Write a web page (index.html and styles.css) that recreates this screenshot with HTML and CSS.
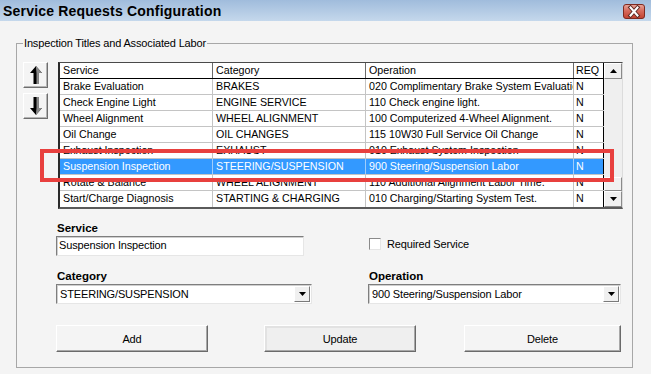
FILE: index.html
```html
<!DOCTYPE html>
<html>
<head>
<meta charset="utf-8">
<title>Service Requests Configuration</title>
<link rel="stylesheet" href="styles.css">
</head>
<body>
<div class="titlebar">
  <span class="title">Service Requests Configuration</span>
  <span class="close">
    <svg width="22" height="15" viewBox="0 0 22 15">
      <defs>
        <linearGradient id="cg" x1="0" y1="0" x2="0" y2="1">
          <stop offset="0" stop-color="#e9a79c"/>
          <stop offset="0.45" stop-color="#d66a5c"/>
          <stop offset="1" stop-color="#c2412f"/>
        </linearGradient>
      </defs>
      <rect x="0.5" y="0.5" width="21" height="14" rx="2.5" fill="url(#cg)" stroke="#7e2a20"/>
      <path d="M7.5 3.5 L14.5 11.5 M14.5 3.5 L7.5 11.5" stroke="#5d2a24" stroke-width="4" stroke-linecap="square"/>
      <path d="M7.5 3.5 L14.5 11.5 M14.5 3.5 L7.5 11.5" stroke="#ffffff" stroke-width="2" stroke-linecap="square"/>
    </svg>
  </span>
</div>

<fieldset class="group">
  <legend>Inspection Titles and Associated Labor</legend>

  <div class="top">
    <div class="movers">
      <button class="mover" type="button">
        <svg width="14" height="20" viewBox="0 0 14 20">
          <polygon points="7,1 13,8 9.5,8 9.5,19 4.5,19 4.5,8 1,8" fill="#000"/>
          <polygon points="7,1 13,8 9.5,8 9.5,19 7.5,19 7.5,8 7,3" fill="#8a8a8a"/>
        </svg>
      </button>
      <button class="mover" type="button">
        <svg width="14" height="20" viewBox="0 0 14 20">
          <polygon points="7,19 13,12 9.5,12 9.5,1 4.5,1 4.5,12 1,12" fill="#000"/>
          <polygon points="7,19 13,12 9.5,12 9.5,1 7.5,1 7.5,12 7,17" fill="#8a8a8a"/>
        </svg>
      </button>
    </div>

    <div class="grid">
      <div class="table">
        <div class="row head">
          <div class="c c1">Service</div><div class="c c2">Category</div><div class="c c3">Operation</div><div class="c c4">REQ</div>
        </div>
        <div class="row">
          <div class="c c1">Brake Evaluation</div><div class="c c2">BRAKES</div><div class="c c3">020 Complimentary Brake System Evaluation</div><div class="c c4">N</div>
        </div>
        <div class="row">
          <div class="c c1">Check Engine Light</div><div class="c c2">ENGINE SERVICE</div><div class="c c3">110 Check engine light.</div><div class="c c4">N</div>
        </div>
        <div class="row">
          <div class="c c1">Wheel Alignment</div><div class="c c2">WHEEL ALIGNMENT</div><div class="c c3">100 Computerized 4-Wheel Alignment.</div><div class="c c4">N</div>
        </div>
        <div class="row">
          <div class="c c1">Oil Change</div><div class="c c2">OIL CHANGES</div><div class="c c3">115 10W30 Full Service Oil Change</div><div class="c c4">N</div>
        </div>
        <div class="row">
          <div class="c c1">Exhaust Inspection</div><div class="c c2">EXHAUST</div><div class="c c3">010 Exhaust System Inspection</div><div class="c c4">N</div>
        </div>
        <div class="row selected">
          <div class="c c1">Suspension Inspection</div><div class="c c2">STEERING/SUSPENSION</div><div class="c c3">900 Steering/Suspension Labor</div><div class="c c4">N</div>
        </div>
        <div class="row">
          <div class="c c1">Rotate &amp; Balance</div><div class="c c2">WHEEL ALIGNMENT</div><div class="c c3">110 Additional Alignment Labor Time.</div><div class="c c4">N</div>
        </div>
        <div class="row">
          <div class="c c1">Start/Charge Diagnosis</div><div class="c c2">STARTING &amp; CHARGING</div><div class="c c3">010 Charging/Starting System Test.</div><div class="c c4">N</div>
        </div>
      </div>
      <div class="vscroll">
        <div class="sbtn">
          <svg width="7" height="4" viewBox="0 0 7 4"><polygon points="3.5,0 7,4 0,4" fill="#000"/></svg>
        </div>
        <div class="track"><div class="thumb"></div></div>
        <div class="sbtn">
          <svg width="7" height="4" viewBox="0 0 7 4"><polygon points="0,0 7,0 3.5,4" fill="#000"/></svg>
        </div>
      </div>
    </div>
  </div>

  <div class="form">
    <label class="lbl">Service</label>
    <div></div>
    <div class="textbox">Suspension Inspection</div>
    <div class="check">
      <span class="box"></span>
      <span class="checktext">Required Service</span>
    </div>
    <label class="lbl lbl2">Category</label>
    <label class="lbl lbl2">Operation</label>
    <div class="combo combo-left">
      <span class="combotext">STEERING/SUSPENSION</span>
      <span class="dd"><svg width="7" height="4" viewBox="0 0 7 4"><polygon points="0,0 7,0 3.5,4" fill="#000"/></svg></span>
    </div>
    <div class="combo combo-right">
      <span class="combotext">900 Steering/Suspension Labor</span>
      <span class="dd"><svg width="7" height="4" viewBox="0 0 7 4"><polygon points="0,0 7,0 3.5,4" fill="#000"/></svg></span>
    </div>
  </div>

  <div class="actions">
    <button class="btn btn-add" type="button">Add</button>
    <button class="btn btn-update" type="button">Update</button>
    <button class="btn btn-delete" type="button">Delete</button>
  </div>
</fieldset>

<div class="highlight"></div>
</body>
</html>
```

FILE: styles.css
```css
* {
  box-sizing: border-box;
}

html, body {
  margin: 0;
  padding: 0;
}

body {
  width: 651px;
  height: 374px;
  overflow: hidden;
  position: relative;
  background: #f4f4f4;
  font-family: "Liberation Sans", Arial, sans-serif;
  color: #000;
}

/* Title bar */
.titlebar {
  height: 21px;
  display: flex;
  align-items: center;
  justify-content: space-between;
  padding: 0 6px 0 3px;
  background: linear-gradient(#a0bcdc, #c5d8ec);
}

.title {
  font-weight: bold;
  font-size: 14px;
  letter-spacing: 0.2px;
  line-height: 16px;
}

.close {
  display: flex;
  width: 22px;
  height: 15px;
  margin-top: 1px;
}

/* Group box */
.group {
  width: 617px;
  margin: 15px 0 0 16px;
  padding: 12px 9px 15px 6px;
  border: 1px solid #a7a7a7;
  min-width: 0;
}

.group legend {
  padding: 0 1px;
  font-size: 11px;
  letter-spacing: -0.15px;
  line-height: 14px;
}

.top {
  display: flex;
  gap: 10px;
  height: 147px;
}

.movers {
  display: flex;
  flex-direction: column;
  gap: 5px;
  width: 25px;
}

.mover {
  width: 25px;
  height: 26px;
  padding: 0;
  display: flex;
  align-items: center;
  justify-content: center;
  background: #f4f4f4;
  border: 1px solid;
  border-color: #ffffff #6e6e6e #6e6e6e #ffffff;
  box-shadow: inset -1px -1px 0 #b4b4b4;
}

/* Data grid */
.grid {
  width: 565px;
  height: 147px;
  display: flex;
  border-top: 1px solid #4a4a4a;
  border-left: 2px solid #2a2a2a;
  border-bottom: 2px solid #5a5a5a;
  border-right: 1px solid #dcdcdc;
  background: #fff;
}

.table {
  width: 544px;
  display: flex;
  flex-direction: column;
}

.row {
  display: flex;
  height: 16px;
  border-bottom: 1px solid #c4c4c4;
  font-size: 10.7px;
  line-height: 15px;
}

.row:last-child {
  border-bottom: none;
}

.row.head {
  border-bottom: 1px solid #000;
}

.c {
  padding-left: 3px;
  white-space: nowrap;
  overflow: hidden;
  border-right: 1px solid #c4c4c4;
}

.head .c {
  border-right-color: #6a6a6a;
}

.c1 { width: 153px; }
.c2 { width: 153px; }
.c3 { width: 208px; }
.c4 {
  width: 30px;
  padding-left: 2px;
  border-right-color: #000 !important;
}

.row.selected {
  background: #3399ff;
  color: #fff;
}

.row.selected .c {
  border-right-color: #9fcdfb;
}

/* Scrollbar */
.vscroll {
  width: 18px;
  display: flex;
  flex-direction: column;
  background: #efefef;
}

.sbtn {
  height: 16px;
  display: flex;
  align-items: center;
  justify-content: center;
  background: #f0f0f0;
  border: 1px solid;
  border-color: #ffffff #8a8a8a #8a8a8a #ffffff;
}

.track {
  flex: 1;
  display: flex;
  flex-direction: column;
  justify-content: flex-end;
}

.thumb {
  height: 14px;
  background: #f0f0f0;
  border: 1px solid;
  border-color: #ffffff #8a8a8a #8a8a8a #ffffff;
}

/* Form */
.form {
  display: grid;
  grid-template-columns: 256px 253px;
  column-gap: 56px;
  margin: 12px 0 0 33px;
}

.lbl {
  font-weight: bold;
  font-size: 11.5px;
  line-height: 14px;
  padding-left: 1px;
  margin-bottom: 1px;
}

.lbl2 {
  margin-top: 13px;
}

.textbox,
.checktext,
.combotext,
.btn {
  font-family: "Liberation Sans", Arial, sans-serif;
  font-size: 11px;
  letter-spacing: -0.15px;
}

.textbox {
  width: 248px;
  height: 20px;
  line-height: 17px;
  padding-left: 2px;
  background: #fff;
  border: 1px solid;
  border-color: #7e7e7e #e6e6e6 #e6e6e6 #7e7e7e;
  box-shadow: inset 1px 1px 0 #cfcfcf;
  white-space: nowrap;
}

.check {
  display: flex;
  align-items: center;
  gap: 6px;
  height: 14px;
  margin-top: 1px;
  padding-left: 1px;
}

.box {
  width: 12px;
  height: 12px;
  background: #fff;
  border: 1px solid;
  border-color: #8a8a8a #e4e4e4 #e4e4e4 #8a8a8a;
}

.checktext {
  line-height: 14px;
}

.combo {
  height: 20px;
  display: flex;
  align-items: center;
  justify-content: space-between;
  padding: 0 1px 0 3px;
  background: #fff;
  border: 1px solid;
  border-color: #7e7e7e #e6e6e6 #e6e6e6 #7e7e7e;
  box-shadow: inset 1px 1px 0 #cfcfcf;
}

.combo-left { width: 256px; }
.combo-right { width: 253px; }

.combotext {
  line-height: 17px;
  white-space: nowrap;
}

.dd {
  width: 16px;
  height: 16px;
  display: flex;
  align-items: center;
  justify-content: center;
  background: #f0f0f0;
  border: 1px solid;
  border-color: #ffffff #7a7a7a #7a7a7a #ffffff;
}

/* Buttons */
.actions {
  display: flex;
  margin: 21px 0 0 33px;
}

.btn {
  height: 27px;
  padding: 0;
  color: #000;
  background: #f4f4f4;
  border: 1px solid;
  border-color: #ffffff #6a6a6a #6a6a6a #ffffff;
  box-shadow: inset -1px -1px 0 #a8a8a8;
}

.btn-add { width: 152px; }

.btn-update {
  width: 152px;
  margin-left: 56px;
  background: #efefef;
  box-shadow: inset -1px -1px 0 #a8a8a8, inset 2px 2px 0 #e2e2e2;
}

.btn-delete {
  width: 157px;
  margin-left: 48px;
}

/* Red annotation rectangle overlaying the selected row */
.highlight {
  position: absolute;
  left: 40px;
  top: 149px;
  width: 574px;
  height: 33px;
  border: 4px solid #e8403e;
  pointer-events: none;
}
```
